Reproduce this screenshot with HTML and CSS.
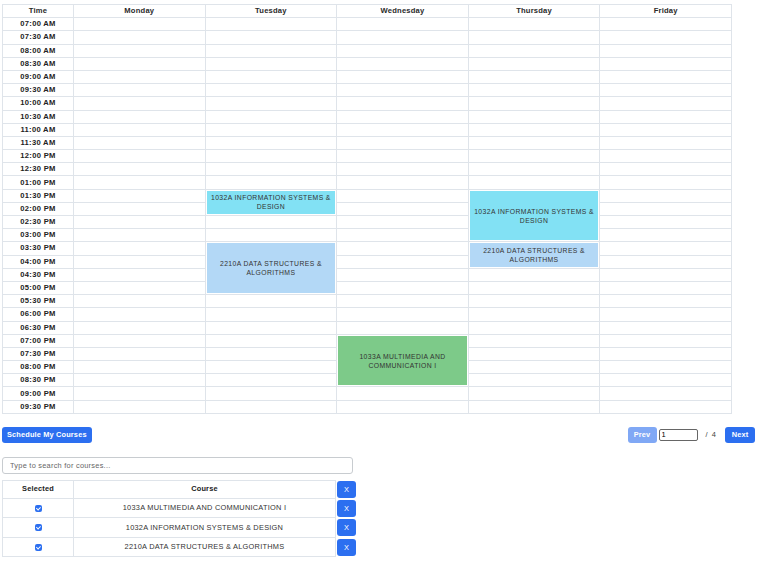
FILE: index.html
```html
<!doctype html>
<html>
  <head>
    <title>Course Scheduler</title>
    <link rel="stylesheet" href="styles.css">
  </head>
  <body>
    <table class="schedule">
      <thead>
        <tr>
          <th class="time-col">Time</th>
          <th>Monday</th>
          <th>Tuesday</th>
          <th>Wednesday</th>
          <th>Thursday</th>
          <th>Friday</th>
        </tr>
      </thead>
      <tbody id="schedule-body"></tbody>
    </table>

    <div class="controls">
      <button class="btn">Schedule My Courses</button>
      <div class="pager">
        <button class="btn btn-disabled">Prev</button>
        <input type="text" class="page-input" value="1" />
        <span class="page-total">/ &nbsp;4</span>
        <button class="btn">Next</button>
      </div>
    </div>

    <input type="text" class="search" placeholder="Type to search for courses..." />

    <table class="courses">
      <thead>
        <tr>
          <th class="sel-col">Selected</th>
          <th class="course-col">Course</th>
          <th class="x-col"><button class="btn-x">X</button></th>
        </tr>
      </thead>
      <tbody id="course-body"></tbody>
    </table>

    <script>
      const times = [];
      for (let h = 7; h <= 21; h++) {
        for (const m of ["00", "30"]) {
          const hh = h > 12 ? h - 12 : h;
          times.push(String(hh).padStart(2, "0") + ":" + m + (h < 12 ? " AM" : " PM"));
        }
      }

      // day index 0..4 (Mon..Fri), starting slot, rows covered
      const blocks = [
        { day: 1, start: "01:30 PM", span: 2, cls: "cyan", name: "1032A INFORMATION SYSTEMS & DESIGN" },
        { day: 3, start: "01:30 PM", span: 4, cls: "cyan", name: "1032A INFORMATION SYSTEMS & DESIGN" },
        { day: 1, start: "03:30 PM", span: 4, cls: "blue", name: "2210A DATA STRUCTURES & ALGORITHMS" },
        { day: 3, start: "03:30 PM", span: 2, cls: "blue", name: "2210A DATA STRUCTURES & ALGORITHMS" },
        { day: 2, start: "07:00 PM", span: 4, cls: "green", name: "1033A MULTIMEDIA AND COMMUNICATION I" },
      ];

      const body = document.getElementById("schedule-body");
      const covered = {};
      times.forEach((t, i) => {
        const tr = document.createElement("tr");
        const th = document.createElement("td");
        th.className = "time";
        th.textContent = t;
        tr.appendChild(th);
        for (let d = 0; d < 5; d++) {
          if (covered[d + "-" + i]) continue;
          const td = document.createElement("td");
          const b = blocks.find((x) => x.day === d && x.start === t);
          if (b) {
            td.rowSpan = b.span;
            td.className = "block " + b.cls;
            td.textContent = b.name;
            for (let k = 1; k < b.span; k++) covered[d + "-" + (i + k)] = true;
          }
          tr.appendChild(td);
        }
        body.appendChild(tr);
      });

      const courses = [
        "1033A MULTIMEDIA AND COMMUNICATION I",
        "1032A INFORMATION SYSTEMS & DESIGN",
        "2210A DATA STRUCTURES & ALGORITHMS",
      ];
      const cbody = document.getElementById("course-body");
      courses.forEach((c) => {
        const tr = document.createElement("tr");
        tr.innerHTML =
          '<td class="sel-col"><span class="check"></span></td>' +
          '<td class="course-name">' + c + "</td>" +
          '<td class="x-col"><button class="btn-x">X</button></td>';
        cbody.appendChild(tr);
      });
    </script>
  </body>
</html>
```

FILE: styles.css
```css
* {
  box-sizing: border-box;
}

body {
  margin: 0;
  padding: 4px 2px 0;
  font-family: "Liberation Sans", Arial, sans-serif;
  color: #222;
  background: #fff;
}

.schedule {
  width: 730px;
  border-collapse: collapse;
  table-layout: fixed;
}

.schedule th,
.schedule td {
  border: 1px solid #dfe4ea;
  padding: 0;
  height: 13.2px;
  font-size: 7.6px;
  line-height: 8px;
  text-align: center;
}

.schedule th {
  font-weight: bold;
  letter-spacing: 0.2px;
  color: #2a2a2a;
}

.time-col {
  width: 71px;
}

.schedule td.time {
  font-weight: bold;
  letter-spacing: 0.3px;
  color: #222;
}

.schedule td.block {
  font-size: 6.8px;
  line-height: 9px;
  letter-spacing: 0.4px;
  color: #333;
  padding: 0 4px;
  box-shadow: inset 0 0 0 1px #fff;
}

.cyan {
  background: #82e1f4;
}

.blue {
  background: #b3d8f6;
}

.green {
  background: #7dca89;
}

.controls {
  width: 753px;
  margin-top: 13px;
  display: flex;
  justify-content: space-between;
  align-items: center;
}

.btn {
  height: 16px;
  padding: 0 5px;
  border: none;
  border-radius: 3px;
  background: #2c6ff0;
  color: #fff;
  font-family: "Liberation Sans", Arial, sans-serif;
  font-size: 7.4px;
  font-weight: bold;
  letter-spacing: 0.15px;
}

.btn-disabled {
  background: #80a8f5;
  width: 29px;
}

.pager {
  display: flex;
  align-items: center;
}

.pager .btn:last-child {
  width: 30px;
}

.page-input {
  width: 39px;
  height: 12px;
  margin-left: 2px;
  padding: 0 2px;
  border: 1px solid #666;
  border-radius: 2px;
  font-family: "Liberation Sans", Arial, sans-serif;
  font-size: 7.5px;
}

.page-total {
  font-size: 7.5px;
  color: #444;
  margin: 0 9px 0 8px;
}

.search {
  display: block;
  width: 351px;
  height: 17px;
  margin-top: 14px;
  padding: 0 7px;
  border: 1px solid #c8ccd0;
  border-radius: 3px;
  font-family: "Liberation Sans", Arial, sans-serif;
  font-size: 7.4px;
  letter-spacing: 0.25px;
  color: #333;
}

.search::placeholder {
  color: #666;
}

.courses {
  margin-top: 6px;
  border-collapse: collapse;
  table-layout: fixed;
  width: 354px;
}

.courses th,
.courses td {
  border: 1px solid #dfe4ea;
  padding: 0;
  height: 19.5px;
  font-size: 7.4px;
  line-height: 8px;
  text-align: center;
}

.courses th {
  height: 18px;
  font-weight: bold;
  letter-spacing: 0.2px;
  color: #222;
}

.sel-col {
  width: 71px;
}

.x-col {
  width: 20px;
}

.courses .x-col {
  border: none;
  padding-left: 1px;
}

.course-name {
  letter-spacing: 0.25px;
  color: #333;
}

.check {
  position: relative;
  display: inline-block;
  width: 7px;
  height: 7px;
  border-radius: 2px;
  background: #2c6ff0;
  vertical-align: middle;
}

.check::after {
  content: "";
  position: absolute;
  left: 2.4px;
  top: 1.2px;
  width: 1.6px;
  height: 3px;
  border: solid #fff;
  border-width: 0 0.8px 0.8px 0;
  transform: rotate(45deg);
}

.btn-x {
  width: 19px;
  height: 17px;
  padding: 0;
  border: none;
  border-radius: 3px;
  background: #2c6ff0;
  color: #fff;
  font-family: "Liberation Sans", Arial, sans-serif;
  font-size: 7.4px;
  display: block;
}
```
